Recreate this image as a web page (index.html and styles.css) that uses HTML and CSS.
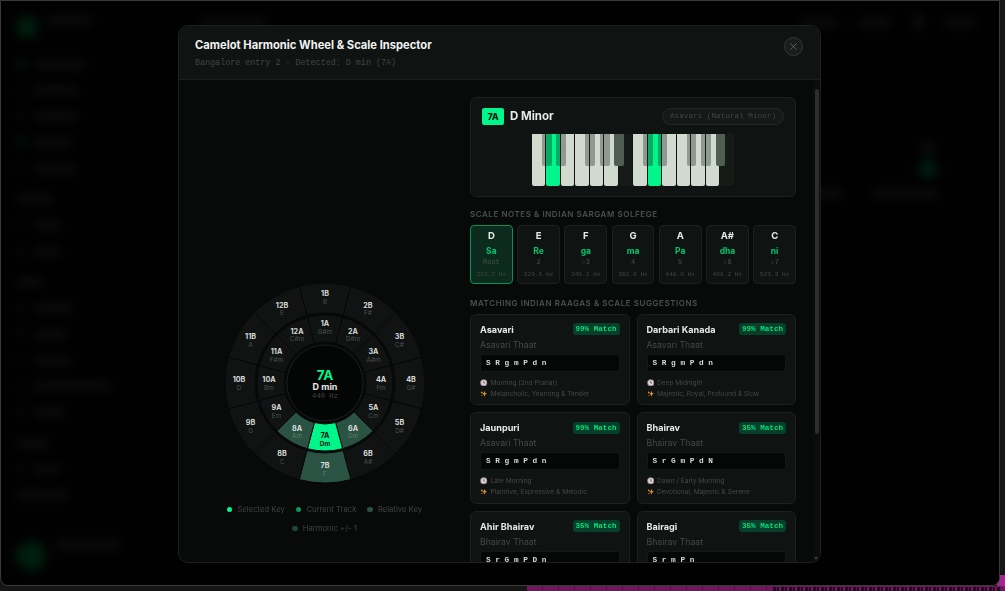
FILE: index.html
```html
<!DOCTYPE html>
<html lang="en">
<head>
    <meta charset="UTF-8">
    <meta name="viewport" content="width=device-width, initial-scale=1.0">
    <title>Camelot Harmonic Wheel</title>
    <link rel="stylesheet" href="styles.css">
</head>
<body>
    <svg class="icon-defs" width="0" height="0">
        <symbol id="icon-clock" viewBox="0 0 10 10">
            <circle cx="5" cy="5" r="4.8" fill="#8f7f8c"/>
            <circle cx="5" cy="5" r="3.6" fill="#d8d0d6"/>
            <path d="M5 2.8V5L6.6 6" fill="none" stroke="#4a2f40" stroke-width="0.9"/>
        </symbol>
        <symbol id="icon-sparkle" viewBox="0 0 10 10">
            <path d="M6 1l1 3 2.6 1-2.6 1-1 3-1-3-2.6-1 2.6-1z" fill="#e0922e"/>
            <path d="M2.4 1.2l.5 1.3 1.2.5-1.2.5-.5 1.3-.5-1.3L.7 3l1.2-.5z" fill="#eeb040"/>
            <path d="M2.6 6l.4 1 1 .4-1 .4-.4 1-.4-1-1-.4 1-.4z" fill="#c47a2e"/>
        </symbol>
    </svg>

    <div class="app">
        <aside class="sidebar">
            <div class="brand"><span class="brand-logo"></span><span class="bar w45"></span></div>
            <div class="nav-group">
                <div class="nav-row"><span class="dot green"></span><span class="bar w50"></span></div>
                <div class="nav-row"><span class="dot"></span><span class="bar w42"></span></div>
                <div class="nav-row"><span class="dot"></span><span class="bar w42"></span></div>
                <div class="nav-row"><span class="dot green"></span><span class="bar w38"></span></div>
                <div class="nav-row"><span class="dot"></span><span class="bar w40"></span></div>
            </div>
            <div class="nav-group">
                <div class="nav-row"><span class="bar w35"></span></div>
                <div class="nav-row"><span class="dot"></span><span class="bar w25"></span></div>
                <div class="nav-row"><span class="dot"></span><span class="bar w25"></span></div>
            </div>
            <div class="nav-group">
                <div class="nav-row"><span class="bar w25"></span></div>
                <div class="nav-row"><span class="dot"></span><span class="bar w38"></span></div>
                <div class="nav-row"><span class="dot"></span><span class="bar w32"></span></div>
                <div class="nav-row"><span class="dot"></span><span class="bar w35"></span></div>
                <div class="nav-row"><span class="dot"></span><span class="bar w75"></span></div>
                <div class="nav-row"><span class="dot"></span><span class="bar w30"></span></div>
            </div>
            <div class="nav-group">
                <div class="nav-row"><span class="bar w32"></span></div>
                <div class="nav-row"><span class="dot"></span><span class="bar w25"></span></div>
                <div class="nav-row"><span class="bar w50"></span></div>
            </div>
            <div class="user-row"><span class="avatar"></span><span class="bar w65"></span></div>
        </aside>
        <main class="app-main">
            <div class="topbar">
                <span class="bar w65"></span>
                <span class="topbar-right">
                    <span class="bar w35"></span>
                    <span class="bar w32"></span>
                    <span class="bar w10"></span>
                    <span class="bar w30"></span>
                </span>
            </div>
            <div class="player-card">
                <span class="player-art"></span>
                <span class="player-dot"></span>
                <div class="player-bars"><span class="bar w50"></span><span class="bar w65"></span></div>
            </div>
        </main>

        <div class="overlay">
            <div class="modal">
                <header class="modal-header">
                    <div>
                        <h1 class="modal-title">Camelot Harmonic Wheel &amp; Scale Inspector</h1>
                        <p class="modal-sub">Bangalore entry 2 · Detected: D min (7A)</p>
                    </div>
                    <button class="close-btn" aria-label="Close">
                        <svg width="9" height="9" viewBox="0 0 9 9"><path d="M1.5 1.5l6 6M7.5 1.5l-6 6" stroke="#5a605e" stroke-width="1" fill="none"/></svg>
                    </button>
                </header>

                <div class="modal-body">
                    <section class="wheel-panel">
                        <svg class="wheel" id="wheel" width="202" height="202" viewBox="-101 -101 202 202">
                            <circle class="hub" r="38"/>
                            <text class="hub-key" y="-3.5">7A</text>
                            <text class="hub-name" y="6.5">D min</text>
                            <text class="hub-hz" y="15">440 Hz</text>
                        </svg>
                        <div class="legend">
                            <span class="legend-item"><i class="swatch selected"></i>Selected Key</span>
                            <span class="legend-item"><i class="swatch current"></i>Current Track</span>
                            <span class="legend-item"><i class="swatch relative"></i>Relative Key</span>
                            <span class="legend-item"><i class="swatch harmonic"></i>Harmonic +/- 1</span>
                        </div>
                    </section>

                    <section class="detail-panel">
                        <div class="key-card">
                            <div class="key-head">
                                <span class="key-badge">7A</span>
                                <span class="key-name">D Minor</span>
                                <span class="key-pill">Asavari (Natural Minor)</span>
                            </div>
                            <div class="piano">
                                <div class="wk"><span class="bk"></span></div>
                                <div class="wk on"><span class="bk"></span></div>
                                <div class="wk"></div>
                                <div class="wk"><span class="bk"></span></div>
                                <div class="wk"><span class="bk"></span></div>
                                <div class="wk"><span class="bk lit"></span></div>
                                <div class="wk off"></div>
                                <div class="wk"><span class="bk"></span></div>
                                <div class="wk on"><span class="bk"></span></div>
                                <div class="wk"></div>
                                <div class="wk"><span class="bk"></span></div>
                                <div class="wk"><span class="bk"></span></div>
                                <div class="wk"><span class="bk lit"></span></div>
                                <div class="wk off"></div>
                            </div>
                        </div>

                        <h2 class="section-label">Scale Notes &amp; Indian Sargam Solfege</h2>
                        <div class="notes">
                            <div class="note active"><b>D</b><em>Sa</em><span>Root</span><small>293.7 Hz</small></div>
                            <div class="note"><b>E</b><em>Re</em><span>2</span><small>329.6 Hz</small></div>
                            <div class="note"><b>F</b><em>ga</em><span>♭3</span><small>349.2 Hz</small></div>
                            <div class="note"><b>G</b><em>ma</em><span>4</span><small>392.0 Hz</small></div>
                            <div class="note"><b>A</b><em>Pa</em><span>5</span><small>440.0 Hz</small></div>
                            <div class="note"><b>A#</b><em>dha</em><span>♭6</span><small>466.2 Hz</small></div>
                            <div class="note"><b>C</b><em>ni</em><span>♭7</span><small>523.3 Hz</small></div>
                        </div>

                        <h2 class="section-label second">Matching Indian Raagas &amp; Scale Suggestions</h2>
                        <div class="raagas">
                            <article class="raaga">
                                <div class="raaga-head"><h3>Asavari</h3><span class="match">99% Match</span></div>
                                <p class="thaat">Asavari Thaat</p>
                                <div class="swaras">S R g m P d n</div>
                                <p class="meta"><svg><use href="#icon-clock"/></svg>Morning (2nd Prahar)</p>
                                <p class="meta"><svg><use href="#icon-sparkle"/></svg>Melancholic, Yearning &amp; Tender</p>
                            </article>
                            <article class="raaga">
                                <div class="raaga-head"><h3>Darbari Kanada</h3><span class="match">99% Match</span></div>
                                <p class="thaat">Asavari Thaat</p>
                                <div class="swaras">S R g m P d n</div>
                                <p class="meta"><svg><use href="#icon-clock"/></svg>Deep Midnight</p>
                                <p class="meta"><svg><use href="#icon-sparkle"/></svg>Majestic, Royal, Profound &amp; Slow</p>
                            </article>
                            <article class="raaga">
                                <div class="raaga-head"><h3>Jaunpuri</h3><span class="match">99% Match</span></div>
                                <p class="thaat">Asavari Thaat</p>
                                <div class="swaras">S R g m P d n</div>
                                <p class="meta"><svg><use href="#icon-clock"/></svg>Late Morning</p>
                                <p class="meta"><svg><use href="#icon-sparkle"/></svg>Plaintive, Expressive &amp; Melodic</p>
                            </article>
                            <article class="raaga">
                                <div class="raaga-head"><h3>Bhairav</h3><span class="match">35% Match</span></div>
                                <p class="thaat">Bhairav Thaat</p>
                                <div class="swaras">S r G m P d N</div>
                                <p class="meta"><svg><use href="#icon-clock"/></svg>Dawn / Early Morning</p>
                                <p class="meta"><svg><use href="#icon-sparkle"/></svg>Devotional, Majestic &amp; Serene</p>
                            </article>
                            <article class="raaga">
                                <div class="raaga-head"><h3>Ahir Bhairav</h3><span class="match">35% Match</span></div>
                                <p class="thaat">Bhairav Thaat</p>
                                <div class="swaras">S r G m P D n</div>
                            </article>
                            <article class="raaga">
                                <div class="raaga-head"><h3>Bairagi</h3><span class="match">35% Match</span></div>
                                <p class="thaat">Bhairav Thaat</p>
                                <div class="swaras">S r m P n</div>
                            </article>
                        </div>
                    </section>
                    <div class="scrollbar"><span class="scroll-thumb"></span><span class="scroll-arrow"></span></div>
                </div>
            </div>
        </div>
    </div>
    <div class="timeline"><span class="timeline-wave"></span></div>
    <span class="timeline-tail"></span>
    <script src="wheel.js"></script>
</body>
</html>
```

FILE: styles.css
```css
* {
    box-sizing: border-box;
    margin: 0;
    padding: 0;
}
body {
    position: relative;
    width: 1005px;
    height: 591px;
    overflow: hidden;
    background-color: #161616;
    font-family: Inter, "Liberation Sans", sans-serif;
}
.icon-defs {
    display: block;
    height: 0;
}

/* app behind the modal, only visible blurred */
.app {
    position: relative;
    z-index: 1;
    display: flex;
    width: 1000px;
    height: 586px;
    background: #0a0a0a;
    border: 1px solid #3a3a3a;
    border-radius: 0 0 8px 8px;
    overflow: hidden;
}
.sidebar {
    display: flex;
    flex-direction: column;
    width: 150px;
    padding: 16px 16px 14px 16px;
}
.brand {
    display: flex;
    align-items: flex-start;
    gap: 10px;
    height: 34px;
}
.brand-logo {
    width: 20px;
    height: 20px;
    border-radius: 6px;
    background: #00c060;
}
.nav-group {
    display: flex;
    flex-direction: column;
    margin-bottom: 5px;
}
.nav-row {
    display: flex;
    align-items: center;
    gap: 8px;
    height: 26px;
}
.dot {
    width: 10px;
    height: 10px;
    border-radius: 50%;
    background: #2a2a2a;
}
.dot.green {
    background: #008a48;
}
.bar {
    display: inline-block;
    height: 7px;
    border-radius: 3px;
    background: #5c5c5c;
}
.w10 { width: 10px; height: 14px; }
.w25 { width: 25px; }
.w30 { width: 30px; }
.w32 { width: 32px; }
.w35 { width: 35px; }
.w38 { width: 38px; }
.w40 { width: 40px; }
.w42 { width: 42px; }
.w45 { width: 45px; }
.w50 { width: 50px; }
.w65 { width: 65px; }
.w75 { width: 75px; }
.user-row {
    display: flex;
    align-items: flex-start;
    gap: 10px;
    margin-top: auto;
    margin-left: -1px;
}
.avatar {
    width: 30px;
    height: 30px;
    border-radius: 50%;
    background: #00c060;
}
.app-main {
    flex: 1;
    padding: 14px 24px 0 50px;
}
.topbar {
    display: flex;
    justify-content: space-between;
    align-items: center;
}
.topbar-right {
    display: flex;
    align-items: center;
    gap: 22px;
}
.player-card {
    display: flex;
    flex-direction: column;
    align-items: flex-end;
    margin-top: 113px;
    padding-right: 37px;
    gap: 3px;
}
.player-art {
    width: 14px;
    height: 14px;
    margin-right: 3px;
    border-radius: 50%;
    background: #555;
}
.player-dot {
    width: 20px;
    height: 20px;
    border-radius: 50%;
    background: #00a860;
}
.player-bars {
    display: flex;
    gap: 30px;
    margin-top: 8px;
}

/* strip of the window behind the app */
.timeline {
    position: relative;
    height: 5px;
    margin-left: 527px;
    background: repeating-linear-gradient(90deg, #6b1a5c 0 15px, #4d1544 15px 16px);
}
.timeline-wave {
    position: absolute;
    top: 1px;
    left: 246px;
    right: 4px;
    height: 4px;
    background: repeating-linear-gradient(90deg, #240a20 0 3px, #5a1750 3px 4px, #240a20 4px 6px, #6b1a5c 6px 8px);
}
.timeline-tail {
    position: absolute;
    top: 575px;
    right: 0;
    width: 8px;
    height: 11px;
    background: #a02a8c;
}

/* modal */
.overlay {
    position: absolute;
    inset: 0;
    display: flex;
    align-items: flex-start;
    justify-content: center;
    padding: 23.5px 1px 0 0;
    background: rgba(0, 0, 0, 0.85);
    backdrop-filter: blur(5px);
}
.modal {
    display: flex;
    flex-direction: column;
    width: 643px;
    height: 538px;
    background: #080a0a;
    border: 1px solid #1c201f;
    border-radius: 10px;
    overflow: hidden;
}
.modal-header {
    display: flex;
    justify-content: space-between;
    align-items: flex-start;
    height: 54px;
    padding: 12px 17px 0 16px;
    background: #0f1312;
    border-bottom: 1px solid #1a1e1d;
}
.modal-title {
    font-size: 11.2px;
    font-weight: 700;
    line-height: 14px;
    color: #f0f2f1;
}
.modal-sub {
    margin-top: 6px;
    font-family: "Liberation Mono", monospace;
    font-size: 8.4px;
    line-height: 11px;
    color: #3f4644;
}
.close-btn {
    display: flex;
    align-items: center;
    justify-content: center;
    width: 19px;
    height: 19px;
    margin-top: -1px;
    background: #191d1c;
    border: 1px solid #343937;
    border-radius: 50%;
}
.modal-body {
    position: relative;
    display: flex;
    flex: 1;
    min-height: 0;
}

/* wheel */
.wheel-panel {
    display: flex;
    flex-direction: column;
    align-items: center;
    justify-content: flex-end;
    width: 291px;
    padding-bottom: 28px;
}
.wheel {
    display: block;
}
.seg {
    fill: #101312;
    stroke: #070909;
    stroke-width: 1;
}
.seg.selected { fill: #00f58a; }
.seg.near { fill: #2b5343; }
.wheel text {
    text-anchor: middle;
    font-family: Inter, "Liberation Sans", sans-serif;
}
.seg-key {
    font-size: 7.2px;
    font-weight: 700;
    fill: #d8dcda;
}
.seg-name {
    font-size: 6.4px;
    fill: #4b514f;
}
.seg-key.dark, .seg-name.dark {
    fill: #04140c;
    font-weight: 700;
}
.seg-name.soft {
    fill: #5d7a6d;
}
.hub {
    fill: #040505;
    stroke: #1a1e1d;
    stroke-width: 1;
}
.wheel .hub-key {
    font-size: 13.5px;
    font-weight: 700;
    fill: #00f58a;
}
.wheel .hub-name {
    font-size: 9px;
    font-weight: 700;
    fill: #e4e7e5;
}
.wheel .hub-hz {
    font-family: "Liberation Mono", monospace;
    font-size: 7.2px;
    fill: #3f4543;
}
.legend {
    display: flex;
    flex-wrap: wrap;
    justify-content: center;
    gap: 9px 11px;
    width: 202px;
    margin-top: 21px;
}
.legend-item {
    display: flex;
    align-items: center;
    gap: 5px;
    font-size: 7.7px;
    line-height: 10px;
    color: #3e4442;
    white-space: nowrap;
}
.swatch {
    width: 5.5px;
    height: 5.5px;
    border-radius: 50%;
}
.swatch.selected { background: #00f58a; }
.swatch.current { background: #069a5c; }
.swatch.relative { background: #2b5343; }
.swatch.harmonic { background: #234538; }

/* right column */
.detail-panel {
    width: 326px;
    padding-top: 17px;
}
.key-card {
    height: 100px;
    padding: 10px 11px;
    background: #0f1312;
    border: 1px solid #1c2120;
    border-radius: 6px;
}
.key-head {
    display: flex;
    align-items: center;
    gap: 6px;
}
.key-badge {
    width: 22px;
    height: 17px;
    font-size: 9px;
    font-weight: 800;
    line-height: 17px;
    text-align: center;
    color: #04140c;
    background: #00f58a;
    border-radius: 2px;
}
.key-name {
    font-size: 11.5px;
    font-weight: 700;
    color: #e6e9e7;
}
.key-pill {
    margin-left: auto;
    width: 122px;
    height: 17px;
    font-family: "Liberation Mono", monospace;
    font-size: 7.7px;
    line-height: 15px;
    text-align: center;
    color: #3f4644;
    background: #151918;
    border: 1px solid #242928;
    border-radius: 9px;
}
.piano {
    display: flex;
    gap: 1px;
    width: 202px;
    height: 52px;
    margin: 9px 0 0 50px;
}
.wk {
    position: relative;
    width: 13.47px;
    height: 52px;
    background: #d0dacf;
    border-radius: 0 0 2px 2px;
}
.wk.on { background: #00f58a; }
.wk.off { background: #161b18; }
.bk {
    position: absolute;
    top: 0;
    right: -6.2px;
    z-index: 1;
    width: 9.7px;
    height: 32px;
    background: rgba(30, 40, 32, 0.36);
    border-radius: 0 0 2px 2px;
}
.bk.lit { background: #4f5e50; }
.section-label {
    margin-top: 12px;
    font-size: 8px;
    font-weight: 600;
    line-height: 10px;
    letter-spacing: 0.55px;
    text-transform: uppercase;
    color: #4a514e;
}
.section-label.second {
    margin-top: 14px;
}
.notes {
    display: grid;
    grid-template-columns: repeat(7, 1fr);
    gap: 4.5px;
    margin-top: 6px;
}
.note {
    display: flex;
    flex-direction: column;
    align-items: center;
    height: 59px;
    padding-top: 4px;
    background: #0f1312;
    border: 1px solid #1c2120;
    border-radius: 4px;
}
.note.active {
    background: #0c2a1e;
    border-color: #0a8f58;
}
.note b {
    font-size: 9.5px;
    line-height: 12px;
    color: #e6e9e7;
}
.note em {
    margin-top: 4px;
    font-style: normal;
    font-size: 8.5px;
    font-weight: 700;
    line-height: 11px;
    color: #00c670;
}
.note span {
    margin-top: 0;
    font-family: "Liberation Mono", monospace;
    font-size: 7px;
    line-height: 10px;
    color: #4a514e;
}
.note small {
    margin-top: 3px;
    font-family: "Liberation Mono", monospace;
    font-size: 6.2px;
    line-height: 9px;
    color: #3f4644;
}
.raagas {
    display: grid;
    grid-template-columns: 1fr 1fr;
    gap: 7px;
    margin-top: 6px;
}
.raaga {
    height: 91.5px;
    padding: 8px 9px;
    background: #0f1312;
    border: 1px solid #1c2120;
    border-radius: 6px;
}
.raaga-head {
    display: flex;
    justify-content: space-between;
    align-items: center;
    height: 13px;
}
.raaga h3 {
    font-size: 9.1px;
    font-weight: 700;
    color: #e6e9e7;
}
.match {
    width: 47px;
    height: 12px;
    font-family: "Liberation Mono", monospace;
    font-size: 7.6px;
    font-weight: 700;
    line-height: 12px;
    text-align: center;
    color: #00e07c;
    background: #06402a;
    border-radius: 3px;
}
.thaat {
    margin-top: 4px;
    font-size: 8.7px;
    line-height: 11px;
    color: #434a47;
}
.swaras {
    height: 18px;
    margin-top: 3px;
    padding-left: 5px;
    font-family: "Liberation Mono", monospace;
    font-size: 7.75px;
    font-weight: 700;
    line-height: 16px;
    color: #d5d9d7;
    background: #050707;
    border: 1px solid #141817;
    border-radius: 3px;
}
.meta {
    display: flex;
    align-items: center;
    gap: 3px;
    margin-top: 1px;
    font-size: 6.6px;
    line-height: 10px;
    color: #434a47;
    white-space: nowrap;
}
.swaras + .meta {
    margin-top: 6px;
}
.meta svg {
    width: 7.5px;
    height: 7.5px;
}
.scrollbar {
    position: absolute;
    top: 0;
    right: 0;
    bottom: 0;
    width: 7px;
    background: #0b0d0d;
}
.scroll-thumb {
    display: block;
    width: 4px;
    height: 345px;
    margin: 9px 0 0 2px;
    background: #2b2e2d;
    border-radius: 2px;
}
.scroll-arrow {
    position: absolute;
    bottom: 2px;
    left: 1px;
    width: 0;
    height: 0;
    border-left: 2.5px solid transparent;
    border-right: 2.5px solid transparent;
    border-top: 3px solid #3a3e3d;
}
```

FILE: wheel.js
```js
const SVG_NS = 'http://www.w3.org/2000/svg';
const outerKeys = ['B', 'F#', 'C#', 'G#', 'D#', 'A#', 'F', 'C', 'G', 'D', 'A', 'E'];
const innerKeys = ['G#m', 'D#m', 'A#m', 'Fm', 'Cm', 'Gm', 'Dm', 'Am', 'Em', 'Bm', 'F#m', 'C#m'];
const wheel = document.getElementById('wheel');
const hub = wheel.querySelector('.hub');

function point(r, deg) {
    const rad = (deg - 90) * Math.PI / 180;
    return (r * Math.cos(rad)).toFixed(2) + ' ' + (r * Math.sin(rad)).toFixed(2);
}

function make(tag, cls) {
    const el = document.createElementNS(SVG_NS, tag);
    el.setAttribute('class', cls);
    wheel.insertBefore(el, hub);
    return el;
}

function addSegment(i, letter, name, r1, r2, labelR) {
    const mid = i * 30;
    const a = mid - 15;
    const b = mid + 15;
    const id = (i + 1) + letter;
    const state = id === '7A' ? 'selected' : (id === '7B' || id === '6A' || id === '8A') ? 'near' : '';

    const seg = make('path', 'seg ' + state);
    seg.setAttribute('d', `M${point(r1, a)} L${point(r2, a)} A${r2} ${r2} 0 0 1 ${point(r2, b)} L${point(r1, b)} A${r1} ${r1} 0 0 0 ${point(r1, a)}Z`);

    const rad = (mid - 90) * Math.PI / 180;
    const x = labelR * Math.cos(rad);
    const y = labelR * Math.sin(rad);

    const key = make('text', 'seg-key' + (state === 'selected' ? ' dark' : ''));
    key.setAttribute('x', x.toFixed(2));
    key.setAttribute('y', (y - 1).toFixed(2));
    key.textContent = id;

    const label = make('text', 'seg-name' + (state === 'selected' ? ' dark' : state === 'near' ? ' soft' : ''));
    label.setAttribute('x', x.toFixed(2));
    label.setAttribute('y', (y + 6.5).toFixed(2));
    label.textContent = name;
}

for (let i = 0; i < 12; i++) {
    addSegment(i, 'B', outerKeys[i], 70, 100, 86);
    addSegment(i, 'A', innerKeys[i], 41, 68, 56);
}
```
